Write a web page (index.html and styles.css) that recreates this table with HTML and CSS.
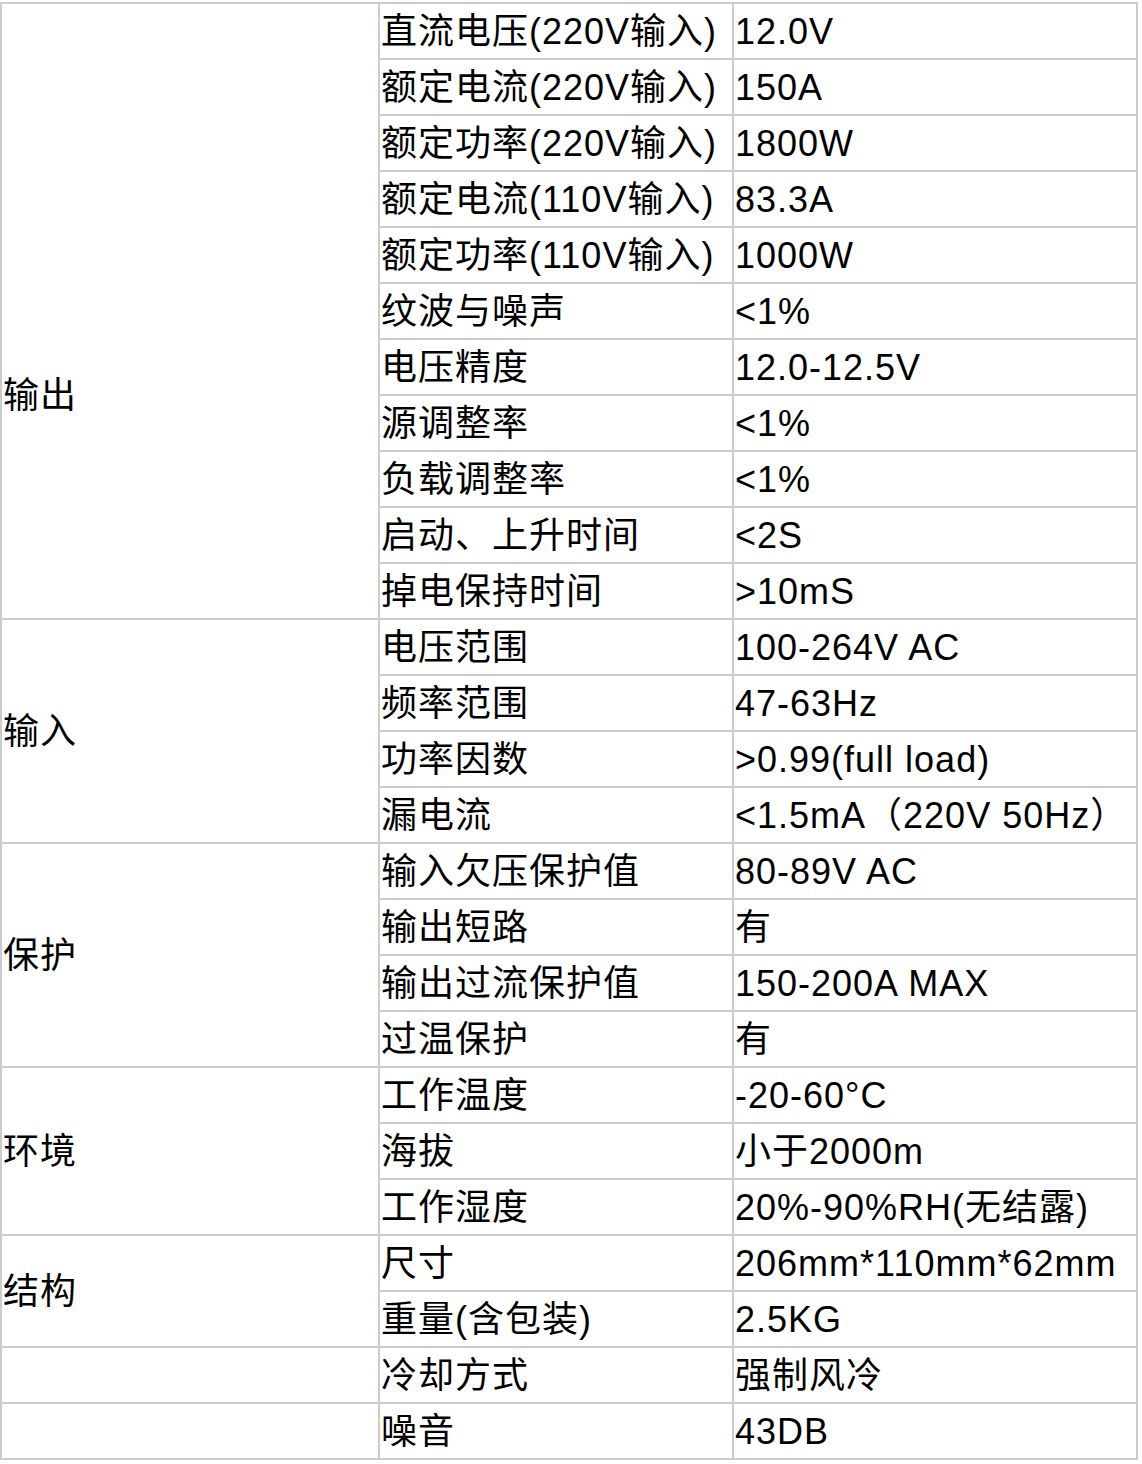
FILE: index.html
```html
<!DOCTYPE html>
<html lang="zh">
<head>
<meta charset="utf-8">
<title>规格参数</title>
<link rel="stylesheet" href="styles.css">
</head>
<body>
<table class="spec">
  <tbody>
    <tr><td class="c1 first" rowspan="11">输出</td><td class="c2">直流电压(220V输入)</td><td class="c3">12.0V</td></tr>
    <tr><td class="c2">额定电流(220V输入)</td><td class="c3">150A</td></tr>
    <tr><td class="c2">额定功率(220V输入)</td><td class="c3">1800W</td></tr>
    <tr><td class="c2">额定电流(110V输入)</td><td class="c3">83.3A</td></tr>
    <tr><td class="c2">额定功率(110V输入)</td><td class="c3">1000W</td></tr>
    <tr><td class="c2">纹波与噪声</td><td class="c3">&lt;1%</td></tr>
    <tr><td class="c2">电压精度</td><td class="c3">12.0-12.5V</td></tr>
    <tr><td class="c2">源调整率</td><td class="c3">&lt;1%</td></tr>
    <tr><td class="c2">负载调整率</td><td class="c3">&lt;1%</td></tr>
    <tr><td class="c2">启动、上升时间</td><td class="c3">&lt;2S</td></tr>
    <tr><td class="c2">掉电保持时间</td><td class="c3">&gt;10mS</td></tr>
    <tr><td class="c1" rowspan="4">输入</td><td class="c2">电压范围</td><td class="c3">100-264V AC</td></tr>
    <tr><td class="c2">频率范围</td><td class="c3">47-63Hz</td></tr>
    <tr><td class="c2">功率因数</td><td class="c3">&gt;0.99(full load)</td></tr>
    <tr><td class="c2">漏电流</td><td class="c3">&lt;1.5mA（220V 50Hz）</td></tr>
    <tr><td class="c1" rowspan="4">保护</td><td class="c2">输入欠压保护值</td><td class="c3">80-89V AC</td></tr>
    <tr><td class="c2">输出短路</td><td class="c3">有</td></tr>
    <tr><td class="c2">输出过流保护值</td><td class="c3">150-200A MAX</td></tr>
    <tr><td class="c2">过温保护</td><td class="c3">有</td></tr>
    <tr><td class="c1" rowspan="3">环境</td><td class="c2">工作温度</td><td class="c3">-20-60°C</td></tr>
    <tr><td class="c2">海拔</td><td class="c3">小于2000m</td></tr>
    <tr><td class="c2">工作湿度</td><td class="c3">20%-90%RH(无结露)</td></tr>
    <tr><td class="c1" rowspan="2">结构</td><td class="c2">尺寸</td><td class="c3">206mm*110mm*62mm</td></tr>
    <tr><td class="c2">重量(含包装)</td><td class="c3">2.5KG</td></tr>
    <tr><td class="c1"></td><td class="c2">冷却方式</td><td class="c3">强制风冷</td></tr>
    <tr><td class="c1"></td><td class="c2">噪音</td><td class="c3">43DB</td></tr>
  </tbody>
</table>
</body>
</html>
```
FILE: styles.css
```css
html, body {
  margin: 0;
  padding: 0;
  background: #ffffff;
}

.spec {
  margin-top: 2px;
  border-collapse: separate;
  border-spacing: 0;
  table-layout: fixed;
  width: 1138px;
  border-top: 2px solid #cccccc;
  border-left: 2px solid #cccccc;
  font-family: "Liberation Sans", "Noto Sans CJK SC", sans-serif;
  font-size: 36px;
  letter-spacing: 1px;
  color: #000000;
}

.spec td {
  box-sizing: border-box;
  border-right: 2px solid #cccccc;
  border-bottom: 2px solid #cccccc;
  padding: 1px 0 0 1px;
  height: 56px;
  line-height: 53px;
  vertical-align: middle;
  white-space: nowrap;
  overflow: hidden;
}

.c1 { width: 378px; }
.c2 { width: 354px; }
.c3 { width: 404px; }

.spec td.first {
  padding-top: 169px;
}
```
